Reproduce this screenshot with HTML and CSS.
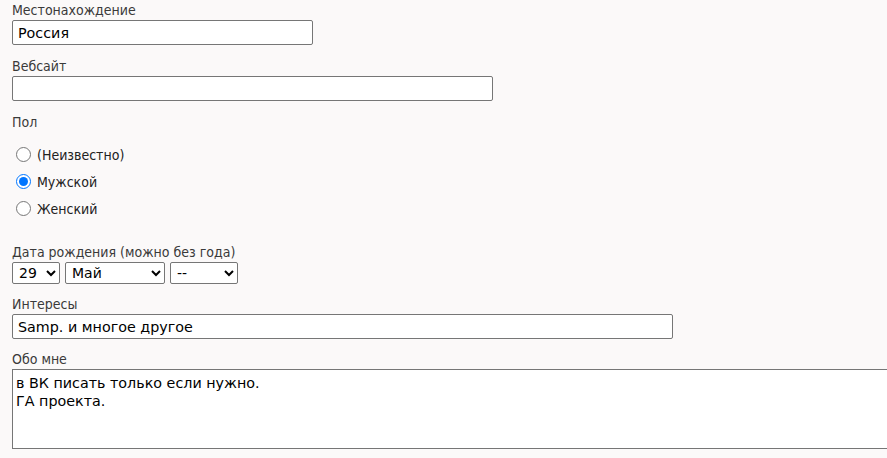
FILE: index.html
```html
<!DOCTYPE html>
<html lang="ru">
<head>
<meta charset="utf-8">
<link rel="stylesheet" href="styles.css">
</head>
<body>
<form class="form">
  <div class="field">
    <label class="lbl" for="loc">Местонахождение</label>
    <input class="txt w-loc" id="loc" type="text" value="Россия">
  </div>
  <div class="field">
    <label class="lbl" for="web">Вебсайт</label>
    <input class="txt w-web" id="web" type="text" value="">
  </div>
  <div class="field">
    <div class="lbl">Пол</div>
    <div class="radios">
      <label class="radio"><input type="radio" name="sex"> (Неизвестно)</label>
      <label class="radio"><input type="radio" name="sex" checked> Мужской</label>
      <label class="radio"><input type="radio" name="sex"> Женский</label>
    </div>
  </div>
  <div class="field date">
    <div class="lbl">Дата рождения (можно без года)</div>
    <div class="selects">
      <select class="sel s-day"><option>29</option></select>
      <select class="sel s-month"><option>Май</option></select>
      <select class="sel s-year"><option>--</option></select>
    </div>
  </div>
  <div class="field">
    <label class="lbl" for="int">Интересы</label>
    <input class="txt w-int" id="int" type="text" value="Samp. и многое другое">
  </div>
  <div class="field">
    <label class="lbl" for="about">Обо мне</label>
    <textarea class="area" id="about">в ВК писать только если нужно.
ГА проекта.</textarea>
  </div>
</form>
</body>
</html>
```
FILE: styles.css
```css
html, body {
  margin: 0;
  padding: 0;
  background: #fbf9f9;
}
body {
  font-family: "DejaVu Sans Condensed", "DejaVu Sans", sans-serif;
  color: #333;
  overflow: hidden;
}
.form {
  display: flex;
  flex-direction: column;
  gap: 14px;
  padding: 3px 0 0 12px;
}
.field {
  display: flex;
  flex-direction: column;
  align-items: flex-start;
}
.lbl {
  display: block;
  font-size: 14px;
  line-height: 15px;
  margin-bottom: 2px;
  color: #3a3a3a;
  font-weight: 300;
}
.txt, .area, .sel {
  font-family: "DejaVu Sans", Verdana, sans-serif;
  font-size: 14.3px;
  color: #000;
  background: #fff;
  border: 1px solid #767676;
  border-radius: 2px;
  box-sizing: border-box;
  margin: 0;
}
.sel {
  font-size: 14px;
}
.txt {
  height: 25px;
  padding: 1px 5px;
}
.w-loc { width: 301px; }
.w-web { width: 481px; }
.w-int { width: 661px; }
.area {
  width: 890px;
  height: 80px;
  padding: 4px 3px;
  resize: none;
  line-height: 18px;
  border-radius: 0;
}
.radios {
  display: flex;
  flex-direction: column;
  margin-top: 9px;
}
.radio {
  display: flex;
  align-items: center;
  height: 27px;
  font-size: 14px;
  color: #222;
  font-family: "DejaVu Sans Condensed", "DejaVu Sans", sans-serif;
}
.radio input {
  width: 15px;
  height: 15px;
  margin: 0 6px 0 4px;
  accent-color: #0075ff;
}
.date {
  margin-top: 9px;
}
.selects {
  display: flex;
  gap: 5px;
}
.sel {
  height: 22px;
  padding: 0 2px;
}
.s-day { width: 48px; }
.s-month { width: 100px; }
.s-year { width: 68px; }
.date + .field {
  margin-top: -1px;
}
.date + .field + .field {
  margin-top: -1px;
}
```
